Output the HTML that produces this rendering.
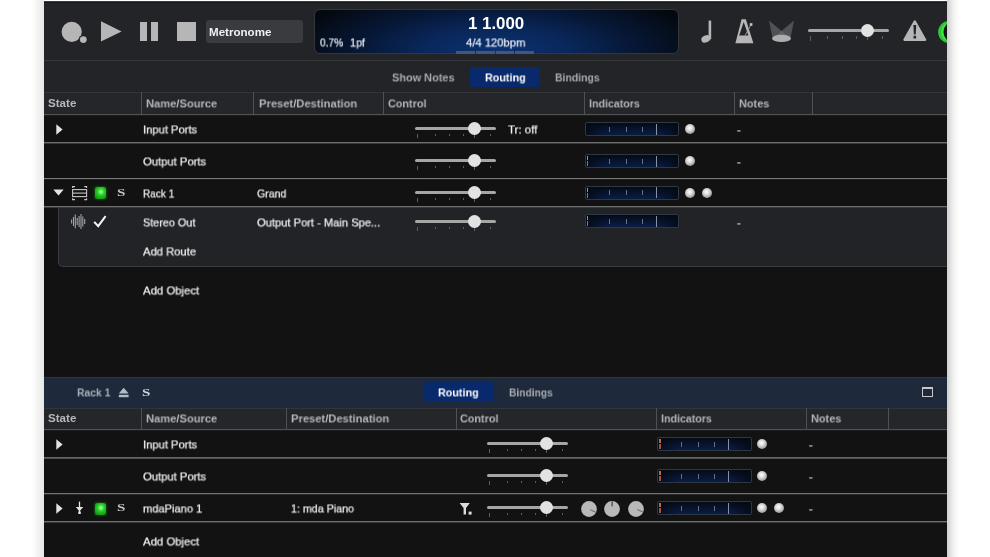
<!DOCTYPE html>
<html><head><meta charset="utf-8"><title>Rack</title>
<style>
html,body{margin:0;padding:0}
body{width:990px;height:557px;position:relative;overflow:hidden;background:#fff;font-family:"Liberation Sans",sans-serif}
.abs,.trk,.tk,.knb,.ind,.led,.gled,.hl,.hdr,.vl,.sub,.win,.topb,.tbar,.disp,.t{position:absolute}
.shl{position:absolute;left:32px;top:0;width:12px;height:557px;background:linear-gradient(to right,rgba(0,0,0,0),rgba(0,0,0,0.095))}
.shr{position:absolute;left:947px;top:0;width:12px;height:557px;background:linear-gradient(to left,rgba(0,0,0,0),rgba(0,0,0,0.05) 45%,rgba(0,0,0,0.19))}
.win{left:44px;top:1px;width:903px;height:556px;background:#121212}
.topb{left:44px;top:1px;width:903px;height:2px;background:linear-gradient(#3a3b3f 50%,#18191c 50%)}
.tbar{left:44px;top:3px;width:903px;height:90px;background:#232428}
.disp{left:313.6px;top:8.6px;width:365px;height:45.4px;box-sizing:border-box;border:1px solid #34363b;border-radius:6px;
 background:radial-gradient(ellipse 58% 150% at 50% 95%,#0b3272 0%,#09275a 35%,#061633 68%,#04090f 100%)}
.trk{height:3px;border-radius:1.5px;background:#a6a6a6}
.tk{width:1px;background:#5c5d60}
.knb{width:13px;height:13px;border-radius:50%;background:#e2e2e2}
.ind{width:94px;height:14px;box-sizing:border-box;border:1px solid #2f3644;border-radius:2px;
 background:linear-gradient(to right,rgba(4,8,16,0.75) 0%,rgba(4,8,16,0) 22%,rgba(4,8,16,0) 78%,rgba(4,8,16,0.75) 100%),linear-gradient(to bottom,#050a15 0%,#07122a 40%,#091d46 100%)}
.ind i{position:absolute;display:block}
.it{top:3.5px;width:1px;height:5px;background:#6a7282}
.il{top:0.5px;width:1.3px;height:11px;background:#8890a2}
.or1{left:1px;top:1px;width:1px;height:4px;background:#e87832}
.or2{left:1px;top:6px;width:1px;height:5px;background:#a47258}
.led{width:10px;height:10px;border-radius:50%;background:radial-gradient(circle at 45% 40%,#ffffff 0%,#d8d8d8 35%,#8c8c8c 80%,#666 100%)}
.gled{width:11.2px;height:11.6px;border-radius:2.5px;background:radial-gradient(circle at 54% 40%,#d8ffd0 0%,#5cf05c 18%,#22c622 42%,#14a014 75%,#0f7a0f 100%);box-shadow:0 0 2px 0.5px #0b4a0b}
.hdr{left:44px;width:903px;height:22px;background:#252629;border-top:1px solid #343539;box-sizing:border-box}
.vl{width:1px;height:22px;background:#505155}
.sub{background:#222327;box-sizing:border-box;border:1.5px solid #3a3b40;border-right:none;border-top:none;border-bottom-left-radius:5px}
.t{white-space:nowrap;line-height:20px;height:20px;transform-origin:0 50%;will-change:transform}
</style></head>
<body>
<div class="shl"></div><div class="shr"></div>
<div class="win"></div>
<div class="topb"></div>
<div class="tbar"></div>
<svg class="abs" style="left:58px;top:18px" width="32" height="28" viewBox="58 18 32 28">
<circle cx="71.7" cy="31.8" r="10.1" fill="#b6b6b6"/>
<circle cx="83.3" cy="39.6" r="4.6" fill="#232428"/>
<circle cx="83.3" cy="39.6" r="3.4" fill="#b6b6b6"/>
</svg>
<svg class="abs" style="left:100px;top:20px" width="24" height="24" viewBox="100 20 24 24"><path d="M101 21.2 L121.6 31.4 L101 41.6 Z" fill="#b6b6b6"/></svg>
<div class="abs" style="left:139.6px;top:21.6px;width:7px;height:19.2px;background:#b6b6b6"></div>
<div class="abs" style="left:150.6px;top:21.6px;width:7px;height:19.2px;background:#b6b6b6"></div>
<div class="abs" style="left:177px;top:21.8px;width:19px;height:18.8px;background:#b6b6b6"></div>
<div class="abs" style="left:206px;top:20px;width:97px;height:22.5px;background:#3a3b3f;border-radius:3px"></div>
<div class="disp"></div>
<div class="abs" style="left:456.4px;top:51px;width:18.6px;height:3px;background:#46567a"></div>
<div class="abs" style="left:476.0px;top:51px;width:18.6px;height:3px;background:#46567a"></div>
<div class="abs" style="left:495.6px;top:51px;width:18.6px;height:3px;background:#46567a"></div>
<div class="abs" style="left:515.2px;top:51px;width:18.6px;height:3px;background:#46567a"></div>
<svg class="abs" style="left:698px;top:18px" width="18" height="28" viewBox="698 18 18 28">
<rect x="708.6" y="20.6" width="2.6" height="18.6" fill="#b6b6b6"/>
<ellipse cx="705.9" cy="38.9" rx="4.7" ry="3.4" transform="rotate(-25 705.9 38.9)" fill="#b6b6b6"/>
</svg>
<svg class="abs" style="left:733px;top:17px" width="24" height="28" viewBox="733 17 24 28">
<path d="M741.6 19.2 L745.8 19.2 L753.4 43.2 L735.4 43.2 Z" fill="#b6b6b6"/>
<path d="M743.7 22 L748.4 35.4 L739.2 35.4 Z" fill="#232428"/>
<path d="M745 35.6 L750.8 25" stroke="#a0a0a0" stroke-width="0.9" fill="none"/>
<rect x="749.8" y="23.2" width="2.6" height="2.6" fill="#c8c8c8"/>
</svg>
<svg class="abs" style="left:767px;top:18px" width="30" height="28" viewBox="767 18 30 28">
<path d="M769 20.6 L790.6 38.6 L772.6 38.6 Z" fill="#6c6d71" fill-opacity="0.62"/>
<path d="M794 20.6 L772.4 38.6 L790.4 38.6 Z" fill="#6c6d71" fill-opacity="0.62"/>
<ellipse cx="781.5" cy="38.4" rx="9.4" ry="3.7" fill="#aeaeae"/>
</svg>
<div class="trk" style="left:808px;top:29.3px;width:81px"></div>
<div class="tk" style="left:809.6px;top:36.0px;height:4.6px"></div>
<div class="tk" style="left:827.2px;top:36.0px;height:2.6px"></div>
<div class="tk" style="left:841.6px;top:36.0px;height:2.6px"></div>
<div class="tk" style="left:855.8px;top:36.0px;height:2.6px"></div>
<div class="tk" style="left:867.0px;top:36.0px;height:4px"></div>
<div class="tk" style="left:882.2px;top:36.0px;height:2.6px"></div>
<div class="knb" style="left:861.2px;top:24.3px"></div>
<svg class="abs" style="left:901px;top:17px" width="28" height="26" viewBox="901 17 28 26">
<path d="M914.8 21.4 L925.2 39.8 L904.4 39.8 Z" fill="#b6b6b6" stroke="#b6b6b6" stroke-width="2.2" stroke-linejoin="round"/>
<path d="M913.4 25 H916.2 L915.7 34.4 H913.9 Z" fill="#232428"/>
<rect x="913.5" y="35.8" width="2.6" height="2.7" fill="#232428"/>
</svg>
<svg class="abs" style="left:933px;top:14px" width="14" height="36" viewBox="933 14 14 36">
<defs><filter id="gb" x="-20%" y="-20%" width="140%" height="140%"><feGaussianBlur stdDeviation="0.55"/></filter></defs>
<g filter="url(#gb)"><circle cx="949.2" cy="32" r="11.1" fill="#2bc832"/><circle cx="950.4" cy="32" r="9.6" fill="#3ee045"/><circle cx="954" cy="32" r="10.5" fill="#14161a"/></g>
</svg>
<div class="hl" style="left:44px;top:60px;width:903px;height:1px;background:#36373b"></div>
<div class="abs" style="left:469.6px;top:66.6px;width:70.6px;height:20.4px;background:#08296c;border-radius:3px"></div>
<div class="hdr" style="top:92px;height:22px"></div>
<div class="vl" style="left:140.5px;top:92px;height:22px"></div>
<div class="vl" style="left:253.1px;top:92px;height:22px"></div>
<div class="vl" style="left:383.1px;top:92px;height:22px"></div>
<div class="vl" style="left:583.5px;top:92px;height:22px"></div>
<div class="vl" style="left:733.7px;top:92px;height:22px"></div>
<div class="vl" style="left:811.9px;top:92px;height:22px"></div>
<div class="hl" style="left:44px;top:114px;width:903px;height:1px;background:#525254"></div><div class="hl" style="left:44px;top:115px;width:903px;height:1px;background:#1c1c1e"></div>
<div class="hl" style="left:44px;top:142px;width:903px;height:1px;background:#6e6e6e"></div><div class="hl" style="left:44px;top:143px;width:903px;height:1px;background:#383838"></div>
<div class="hl" style="left:44px;top:178px;width:903px;height:1px;background:#7a7a7a"></div><div class="hl" style="left:44px;top:179px;width:903px;height:1px;background:#1e1e1e"></div>
<div class="sub" style="left:58px;top:206.5px;width:889px;height:60px"></div>
<div class="hl" style="left:44px;top:206px;width:903px;height:1px;background:#6e6e6e"></div><div class="hl" style="left:44px;top:207px;width:903px;height:1px;background:#3a3a3c"></div>
<svg class="abs" style="left:55.6px;top:123.80000000000001px" width="7" height="11" viewBox="0 0 7 11"><path d="M0.3 0.2 L6.6 5.5 L0.3 10.8 Z" fill="#e4e4e4"/></svg>
<div class="trk" style="left:415.4px;top:127.0px;width:81px"></div>
<div class="tk" style="left:417.0px;top:133.7px;height:4.6px"></div>
<div class="tk" style="left:434.6px;top:133.7px;height:2.6px"></div>
<div class="tk" style="left:449.0px;top:133.7px;height:2.6px"></div>
<div class="tk" style="left:463.2px;top:133.7px;height:2.6px"></div>
<div class="tk" style="left:474.4px;top:133.7px;height:4px"></div>
<div class="tk" style="left:489.6px;top:133.7px;height:2.6px"></div>
<div class="knb" style="left:468.4px;top:122.0px"></div>
<div class="ind" style="left:585px;top:122px;width:94px"><i class="it" style="left:22.7px"></i><i class="it" style="left:39.7px"></i><i class="it" style="left:55.7px"></i><i class="il" style="left:69.6px"></i></div>
<div class="led" style="left:684.6px;top:124px"></div>
<div class="trk" style="left:415.4px;top:159.0px;width:81px"></div>
<div class="tk" style="left:417.0px;top:165.7px;height:4.6px"></div>
<div class="tk" style="left:434.6px;top:165.7px;height:2.6px"></div>
<div class="tk" style="left:449.0px;top:165.7px;height:2.6px"></div>
<div class="tk" style="left:463.2px;top:165.7px;height:2.6px"></div>
<div class="tk" style="left:474.4px;top:165.7px;height:4px"></div>
<div class="tk" style="left:489.6px;top:165.7px;height:2.6px"></div>
<div class="knb" style="left:468.4px;top:154.0px"></div>
<div class="ind" style="left:585px;top:154px;width:94px"><i class="or1" style="width:1px;background:#e87832"></i><i class="or2" style="width:1px;background:#a47258"></i><i class="it" style="left:22.7px"></i><i class="it" style="left:39.7px"></i><i class="it" style="left:55.7px"></i><i class="il" style="left:69.6px"></i></div>
<div class="led" style="left:684.6px;top:156px"></div>
<svg class="abs" style="left:53px;top:189.4px" width="11" height="7" viewBox="0 0 11 7"><path d="M0.3 0.5 L10.7 0.5 L5.5 6.5 Z" fill="#e4e4e4"/></svg>
<svg class="abs" style="left:71px;top:185px" width="17" height="16" viewBox="71 185 17 16">
<g fill="none" stroke="#c6c6c6" stroke-width="1.1">
<rect x="72.6" y="189.6" width="14" height="7"/>
<path d="M72.6 193.1 H86.6"/>
<path d="M72.6 188 V186.6 H75"/><path d="M86.6 188 V186.6 H84.2"/>
<path d="M72.6 198.2 V199.6 H75"/><path d="M86.6 198.2 V199.6 H84.2"/>
</g></svg>
<div class="gled" style="left:94.6px;top:187.2px"></div>
<div class="trk" style="left:415.4px;top:191.0px;width:81px"></div>
<div class="tk" style="left:417.0px;top:197.7px;height:4.6px"></div>
<div class="tk" style="left:434.6px;top:197.7px;height:2.6px"></div>
<div class="tk" style="left:449.0px;top:197.7px;height:2.6px"></div>
<div class="tk" style="left:463.2px;top:197.7px;height:2.6px"></div>
<div class="tk" style="left:474.4px;top:197.7px;height:4px"></div>
<div class="tk" style="left:489.6px;top:197.7px;height:2.6px"></div>
<div class="knb" style="left:468.4px;top:186.0px"></div>
<div class="ind" style="left:585px;top:185.5px;width:94px"><i class="or1" style="width:1px;background:#e87832"></i><i class="or2" style="width:1px;background:#a47258"></i><i class="it" style="left:22.7px"></i><i class="it" style="left:39.7px"></i><i class="it" style="left:55.7px"></i><i class="il" style="left:69.6px"></i></div>
<div class="led" style="left:684.6px;top:187.5px"></div>
<div class="led" style="left:701.5px;top:187.5px"></div>
<svg class="abs" style="left:70px;top:213px" width="17" height="17" viewBox="70 213 17 17">
<g stroke="#a2a2a2" stroke-width="1.1" fill="none">
<path d="M71.6 219.6 V223.6"/><path d="M73.5 217 V226"/><path d="M75.3 214.4 V228.2"/><path d="M77.2 218 V225"/>
<path d="M79.1 216 V227"/><path d="M81 214 V229"/><path d="M82.8 216.4 V226.6"/><path d="M84.7 219 V224"/>
</g></svg>
<svg class="abs" style="left:92px;top:214px" width="16" height="15" viewBox="92 214 16 15"><path d="M94.2 221.8 L98.2 226.2 L105.6 216.2" stroke="#f6f6f6" stroke-width="2" fill="none"/></svg>
<div class="trk" style="left:415.4px;top:220.0px;width:81px"></div>
<div class="tk" style="left:417.0px;top:226.7px;height:4.6px"></div>
<div class="tk" style="left:434.6px;top:226.7px;height:2.6px"></div>
<div class="tk" style="left:449.0px;top:226.7px;height:2.6px"></div>
<div class="tk" style="left:463.2px;top:226.7px;height:2.6px"></div>
<div class="tk" style="left:474.4px;top:226.7px;height:4px"></div>
<div class="tk" style="left:489.6px;top:226.7px;height:2.6px"></div>
<div class="knb" style="left:468.4px;top:215.0px"></div>
<div class="ind" style="left:585px;top:214px;width:94px"><i class="or1" style="width:1px;background:#e87832"></i><i class="or2" style="width:1px;background:#a47258"></i><i class="it" style="left:22.7px"></i><i class="it" style="left:39.7px"></i><i class="it" style="left:55.7px"></i><i class="il" style="left:69.6px"></i></div>
<div class="abs" style="left:44px;top:377px;width:903px;height:31px;background:#1e2a3c;border-top:1px solid #2a3648;box-sizing:border-box"></div>
<svg class="abs" style="left:118px;top:387px" width="12" height="11" viewBox="0 0 12 11">
<path d="M5.7 0.8 L10.6 6.6 L0.8 6.6 Z" fill="#b4bac2"/><rect x="0.8" y="7.8" width="9.8" height="2.4" fill="#b4bac2"/></svg>
<div class="abs" style="left:423.8px;top:382.4px;width:70.2px;height:20px;background:#08296c;border-radius:3px"></div>
<div class="abs" style="left:921.6px;top:387.4px;width:11.4px;height:10px;box-sizing:border-box;border:1px solid #c8c8c8;border-top-width:2px"></div>
<div class="hdr" style="top:408px;height:21px"></div>
<div class="vl" style="left:140.5px;top:408px;height:21px"></div>
<div class="vl" style="left:286.2px;top:408px;height:21px"></div>
<div class="vl" style="left:455.5px;top:408px;height:21px"></div>
<div class="vl" style="left:655.8px;top:408px;height:21px"></div>
<div class="vl" style="left:805.9px;top:408px;height:21px"></div>
<div class="vl" style="left:888.0px;top:408px;height:21px"></div>
<div class="hl" style="left:44px;top:429px;width:903px;height:1px;background:#525254"></div><div class="hl" style="left:44px;top:430px;width:903px;height:1px;background:#1c1c1e"></div>
<div class="hl" style="left:44px;top:457px;width:903px;height:1px;background:#646464"></div><div class="hl" style="left:44px;top:458px;width:903px;height:1px;background:#505050"></div>
<div class="hl" style="left:44px;top:493px;width:903px;height:1px;background:#727272"></div><div class="hl" style="left:44px;top:494px;width:903px;height:1px;background:#2a2a2a"></div>
<div class="hl" style="left:44px;top:521px;width:903px;height:1px;background:#6e6e6e"></div><div class="hl" style="left:44px;top:522px;width:903px;height:1px;background:#383838"></div>
<svg class="abs" style="left:55.6px;top:438.8px" width="7" height="11" viewBox="0 0 7 11"><path d="M0.3 0.2 L6.6 5.5 L0.3 10.8 Z" fill="#e4e4e4"/></svg>
<div class="trk" style="left:487.4px;top:442.0px;width:81px"></div>
<div class="tk" style="left:489.0px;top:448.7px;height:4.6px"></div>
<div class="tk" style="left:506.6px;top:448.7px;height:2.6px"></div>
<div class="tk" style="left:521.0px;top:448.7px;height:2.6px"></div>
<div class="tk" style="left:535.2px;top:448.7px;height:2.6px"></div>
<div class="tk" style="left:546.4px;top:448.7px;height:4px"></div>
<div class="tk" style="left:561.6px;top:448.7px;height:2.6px"></div>
<div class="knb" style="left:540.4px;top:437.0px"></div>
<div class="ind" style="left:657px;top:437px;width:95px"><i class="or1" style="width:2px;background:#c06a38"></i><i class="or2" style="width:2px;background:#96583c"></i><i class="it" style="left:22.7px"></i><i class="it" style="left:39.7px"></i><i class="it" style="left:55.7px"></i><i class="il" style="left:69.6px"></i></div>
<div class="led" style="left:757px;top:439px"></div>
<div class="trk" style="left:487.4px;top:474.0px;width:81px"></div>
<div class="tk" style="left:489.0px;top:480.7px;height:4.6px"></div>
<div class="tk" style="left:506.6px;top:480.7px;height:2.6px"></div>
<div class="tk" style="left:521.0px;top:480.7px;height:2.6px"></div>
<div class="tk" style="left:535.2px;top:480.7px;height:2.6px"></div>
<div class="tk" style="left:546.4px;top:480.7px;height:4px"></div>
<div class="tk" style="left:561.6px;top:480.7px;height:2.6px"></div>
<div class="knb" style="left:540.4px;top:469.0px"></div>
<div class="ind" style="left:657px;top:469px;width:95px"><i class="or1" style="width:2px;background:#c06a38"></i><i class="or2" style="width:2px;background:#96583c"></i><i class="it" style="left:22.7px"></i><i class="it" style="left:39.7px"></i><i class="it" style="left:55.7px"></i><i class="il" style="left:69.6px"></i></div>
<div class="led" style="left:757px;top:471px"></div>
<svg class="abs" style="left:55.6px;top:502.8px" width="7" height="11" viewBox="0 0 7 11"><path d="M0.3 0.2 L6.6 5.5 L0.3 10.8 Z" fill="#e4e4e4"/></svg>
<svg class="abs" style="left:74px;top:500px" width="11" height="16" viewBox="74 500 11 16">
<path d="M79.5 501.6 V513" stroke="#e6e6e6" stroke-width="1.3" fill="none"/>
<path d="M75.8 506.9 H83.2 L80 510.8 H79 Z" fill="#e6e6e6"/>
<rect x="78.3" y="511.4" width="2.5" height="2.7" rx="0.6" fill="#e6e6e6"/>
</svg>
<div class="gled" style="left:94.6px;top:503px"></div>
<svg class="abs" style="left:459px;top:502px" width="15" height="14" viewBox="0 0 15 14">
<path d="M0.6 1 H10.8 L7 6 V12.4 H4.6 V6 Z" fill="#dcdcdc"/><rect x="9.6" y="9.6" width="3" height="3" fill="#dcdcdc"/></svg>
<div class="trk" style="left:487.4px;top:506.0px;width:81px"></div>
<div class="tk" style="left:489.0px;top:512.7px;height:4.6px"></div>
<div class="tk" style="left:506.6px;top:512.7px;height:2.6px"></div>
<div class="tk" style="left:521.0px;top:512.7px;height:2.6px"></div>
<div class="tk" style="left:535.2px;top:512.7px;height:2.6px"></div>
<div class="tk" style="left:546.4px;top:512.7px;height:4px"></div>
<div class="tk" style="left:561.6px;top:512.7px;height:2.6px"></div>
<div class="knb" style="left:540.4px;top:501.0px"></div>
<svg class="abs" style="left:579.9px;top:499.6px" width="18" height="18" viewBox="-9 -9 18 18">
<circle r="7.9" fill="#b9b9b9"/><path d="M0 -1.5 L0 -7.6" stroke="#707070" stroke-width="1.1" transform="rotate(116)"/></svg>
<svg class="abs" style="left:603.3px;top:499.6px" width="18" height="18" viewBox="-9 -9 18 18">
<circle r="7.9" fill="#b9b9b9"/><path d="M0 -2.6 L0 -7.6" stroke="#5e5e5e" stroke-width="1.6" transform="rotate(2)"/></svg>
<svg class="abs" style="left:626.7px;top:499.6px" width="18" height="18" viewBox="-9 -9 18 18">
<circle r="7.9" fill="#b9b9b9"/><path d="M0 -1.5 L0 -7.6" stroke="#707070" stroke-width="1.1" transform="rotate(114)"/></svg>
<div class="ind" style="left:657px;top:501px;width:95px"><i class="or1" style="width:2px;background:#c06a38"></i><i class="or2" style="width:2px;background:#96583c"></i><i class="it" style="left:22.7px"></i><i class="it" style="left:39.7px"></i><i class="it" style="left:55.7px"></i><i class="il" style="left:69.6px"></i></div>
<div class="led" style="left:757px;top:503px"></div>
<div class="led" style="left:773.6px;top:503px"></div>
<span class="t" id="t0" style="left:209.4px;top:21.700000000000003px;font-size:11.5px;font-weight:bold;color:#f0f0f0;font-family:'Liberation Sans', sans-serif;transform:translateY(0.4px) scaleX(1.0065)">Metronome</span>
<span class="t" id="t1" style="-webkit-text-stroke:0.25px;left:320.2px;top:32.1px;font-size:11.5px;font-weight:normal;color:#e8ecf4;font-family:'Liberation Sans', sans-serif;transform:translateY(0.4px) scaleX(0.8846)">0.7%</span>
<span class="t" id="t2" style="-webkit-text-stroke:0.25px;left:350px;top:32.1px;font-size:11.5px;font-weight:normal;color:#e8ecf4;font-family:'Liberation Sans', sans-serif;transform:translateY(0.4px) scaleX(0.9375)">1pf</span>
<span class="t" id="t3" style="left:468.4px;top:12.899999999999999px;font-size:16.5px;font-weight:bold;color:#ffffff;font-family:'Liberation Sans', sans-serif;transform:translateY(0.4px) scaleX(1.0218)">1 1.000</span>
<span class="t" id="t4" style="-webkit-text-stroke:0.25px;left:465.7px;top:32.1px;font-size:11.5px;font-weight:normal;color:#e8ecf4;font-family:'Liberation Sans', sans-serif;transform:translateY(0.4px) scaleX(0.9770)">4/4 120bpm</span>
<span class="t" id="t5" style="left:392px;top:66.5px;font-size:11.5px;font-weight:bold;color:#a9abb0;font-family:'Liberation Sans', sans-serif;transform:translateY(0.4px) scaleX(0.9500)">Show Notes</span>
<span class="t" id="t6" style="left:484.6px;top:66.5px;font-size:11.5px;font-weight:bold;color:#ffffff;font-family:'Liberation Sans', sans-serif;transform:translateY(0.4px) scaleX(0.9349)">Routing</span>
<span class="t" id="t7" style="left:554.5px;top:66.5px;font-size:11.5px;font-weight:bold;color:#a9abb0;font-family:'Liberation Sans', sans-serif;transform:translateY(0.4px) scaleX(0.9082)">Bindings</span>
<span class="t" id="t8" style="left:48.4px;top:93.1px;font-size:11.5px;font-weight:bold;color:#b4b6ba;font-family:'Liberation Sans', sans-serif;transform:translateY(0.4px) scaleX(1.0107)">State</span>
<span class="t" id="t9" style="left:145.8px;top:93.1px;font-size:11.5px;font-weight:bold;color:#b4b6ba;font-family:'Liberation Sans', sans-serif;transform:translateY(0.4px) scaleX(0.9689)">Name/Source</span>
<span class="t" id="t10" style="left:258.5px;top:93.1px;font-size:11.5px;font-weight:bold;color:#b4b6ba;font-family:'Liberation Sans', sans-serif;transform:translateY(0.4px) scaleX(0.9723)">Preset/Destination</span>
<span class="t" id="t11" style="left:388.2px;top:93.1px;font-size:11.5px;font-weight:bold;color:#b4b6ba;font-family:'Liberation Sans', sans-serif;transform:translateY(0.4px) scaleX(0.9390)">Control</span>
<span class="t" id="t12" style="left:588.8px;top:93.1px;font-size:11.5px;font-weight:bold;color:#b4b6ba;font-family:'Liberation Sans', sans-serif;transform:translateY(0.4px) scaleX(0.9255)">Indicators</span>
<span class="t" id="t13" style="left:739px;top:93.1px;font-size:11.5px;font-weight:bold;color:#b4b6ba;font-family:'Liberation Sans', sans-serif;transform:translateY(0.4px) scaleX(0.9500)">Notes</span>
<span class="t" id="t14" style="-webkit-text-stroke:0.25px;left:143.3px;top:119.0px;font-size:11.5px;font-weight:normal;color:#f0f0f0;font-family:'Liberation Sans', sans-serif;transform:translateY(0.4px) scaleX(0.9732)">Input Ports</span>
<span class="t" id="t15" style="-webkit-text-stroke:0.25px;left:508px;top:119.0px;font-size:11.5px;font-weight:normal;color:#f0f0f0;font-family:'Liberation Sans', sans-serif;transform:translateY(0.4px) scaleX(0.9931)">Tr: off</span>
<span class="t" id="t16" style="-webkit-text-stroke:0.25px;left:737.4px;top:118.6px;font-size:11.5px;font-weight:normal;color:#f0f0f0;font-family:'Liberation Sans', sans-serif;transform:translateY(0.4px) scaleX(0.9500)">-</span>
<span class="t" id="t17" style="-webkit-text-stroke:0.25px;left:143.3px;top:151.0px;font-size:11.5px;font-weight:normal;color:#f0f0f0;font-family:'Liberation Sans', sans-serif;transform:translateY(0.4px) scaleX(0.9769)">Output Ports</span>
<span class="t" id="t18" style="-webkit-text-stroke:0.25px;left:737.4px;top:150.6px;font-size:11.5px;font-weight:normal;color:#f0f0f0;font-family:'Liberation Sans', sans-serif;transform:translateY(0.4px) scaleX(0.9500)">-</span>
<span class="t" id="t19" style="left:116.6px;top:182.5px;font-size:10.5px;font-weight:bold;color:#c4c4c4;font-family:'Liberation Serif', serif;transform:translateY(0.4px) scaleX(1.4333)">S</span>
<span class="t" id="t20" style="-webkit-text-stroke:0.25px;left:143.3px;top:183.0px;font-size:11.5px;font-weight:normal;color:#f0f0f0;font-family:'Liberation Sans', sans-serif;transform:translateY(0.4px) scaleX(0.8694)">Rack 1</span>
<span class="t" id="t21" style="-webkit-text-stroke:0.25px;left:256.7px;top:183.0px;font-size:11.5px;font-weight:normal;color:#f0f0f0;font-family:'Liberation Sans', sans-serif;transform:translateY(0.4px) scaleX(0.9156)">Grand</span>
<span class="t" id="t22" style="-webkit-text-stroke:0.25px;left:143.3px;top:212.0px;font-size:11.5px;font-weight:normal;color:#f0f0f0;font-family:'Liberation Sans', sans-serif;transform:translateY(0.4px) scaleX(0.9411)">Stereo Out</span>
<span class="t" id="t23" style="-webkit-text-stroke:0.25px;left:256.7px;top:212.0px;font-size:11.5px;font-weight:normal;color:#f0f0f0;font-family:'Liberation Sans', sans-serif;transform:translateY(0.4px) scaleX(0.9693)">Output Port - Main Spe...</span>
<span class="t" id="t24" style="-webkit-text-stroke:0.25px;left:737.4px;top:211.6px;font-size:11.5px;font-weight:normal;color:#f0f0f0;font-family:'Liberation Sans', sans-serif;transform:translateY(0.4px) scaleX(0.9500)">-</span>
<span class="t" id="t25" style="-webkit-text-stroke:0.25px;left:143.3px;top:241.0px;font-size:11.5px;font-weight:normal;color:#f0f0f0;font-family:'Liberation Sans', sans-serif;transform:translateY(0.4px) scaleX(0.9759)">Add Route</span>
<span class="t" id="t26" style="-webkit-text-stroke:0.25px;left:143.3px;top:279.5px;font-size:11.5px;font-weight:normal;color:#f0f0f0;font-family:'Liberation Sans', sans-serif;transform:translateY(0.4px) scaleX(0.9877)">Add Object</span>
<span class="t" id="t27" style="left:77px;top:381.8px;font-size:11.5px;font-weight:bold;color:#aab0ba;font-family:'Liberation Sans', sans-serif;transform:translateY(0.4px) scaleX(0.9000)">Rack 1</span>
<span class="t" id="t28" style="left:142.2px;top:381.6px;font-size:11px;font-weight:bold;color:#d0d4da;font-family:'Liberation Serif', serif;transform:translateY(0.4px) scaleX(1.3667)">S</span>
<span class="t" id="t29" style="left:438px;top:382.0px;font-size:11.5px;font-weight:bold;color:#ffffff;font-family:'Liberation Sans', sans-serif;transform:translateY(0.4px) scaleX(0.9349)">Routing</span>
<span class="t" id="t30" style="left:508.6px;top:382.0px;font-size:11.5px;font-weight:bold;color:#a9abb0;font-family:'Liberation Sans', sans-serif;transform:translateY(0.4px) scaleX(0.8898)">Bindings</span>
<span class="t" id="t31" style="left:48.4px;top:408.1px;font-size:11.5px;font-weight:bold;color:#b4b6ba;font-family:'Liberation Sans', sans-serif;transform:translateY(0.4px) scaleX(1.0107)">State</span>
<span class="t" id="t32" style="left:145.8px;top:408.1px;font-size:11.5px;font-weight:bold;color:#b4b6ba;font-family:'Liberation Sans', sans-serif;transform:translateY(0.4px) scaleX(0.9689)">Name/Source</span>
<span class="t" id="t33" style="left:291.3px;top:408.1px;font-size:11.5px;font-weight:bold;color:#b4b6ba;font-family:'Liberation Sans', sans-serif;transform:translateY(0.4px) scaleX(0.9723)">Preset/Destination</span>
<span class="t" id="t34" style="left:460.3px;top:408.1px;font-size:11.5px;font-weight:bold;color:#b4b6ba;font-family:'Liberation Sans', sans-serif;transform:translateY(0.4px) scaleX(0.9390)">Control</span>
<span class="t" id="t35" style="left:661px;top:408.1px;font-size:11.5px;font-weight:bold;color:#b4b6ba;font-family:'Liberation Sans', sans-serif;transform:translateY(0.4px) scaleX(0.9255)">Indicators</span>
<span class="t" id="t36" style="left:811px;top:408.1px;font-size:11.5px;font-weight:bold;color:#b4b6ba;font-family:'Liberation Sans', sans-serif;transform:translateY(0.4px) scaleX(0.9500)">Notes</span>
<span class="t" id="t37" style="-webkit-text-stroke:0.25px;left:143.3px;top:434.0px;font-size:11.5px;font-weight:normal;color:#f0f0f0;font-family:'Liberation Sans', sans-serif;transform:translateY(0.4px) scaleX(0.9732)">Input Ports</span>
<span class="t" id="t38" style="-webkit-text-stroke:0.25px;left:809.0px;top:433.6px;font-size:11.5px;font-weight:normal;color:#f0f0f0;font-family:'Liberation Sans', sans-serif;transform:translateY(0.4px) scaleX(0.9500)">-</span>
<span class="t" id="t39" style="-webkit-text-stroke:0.25px;left:143.3px;top:466.0px;font-size:11.5px;font-weight:normal;color:#f0f0f0;font-family:'Liberation Sans', sans-serif;transform:translateY(0.4px) scaleX(0.9769)">Output Ports</span>
<span class="t" id="t40" style="-webkit-text-stroke:0.25px;left:809.0px;top:465.6px;font-size:11.5px;font-weight:normal;color:#f0f0f0;font-family:'Liberation Sans', sans-serif;transform:translateY(0.4px) scaleX(0.9500)">-</span>
<span class="t" id="t41" style="left:116.6px;top:497.7px;font-size:10.5px;font-weight:bold;color:#c4c4c4;font-family:'Liberation Serif', serif;transform:translateY(0.4px) scaleX(1.4333)">S</span>
<span class="t" id="t42" style="-webkit-text-stroke:0.25px;left:143.3px;top:498.0px;font-size:11.5px;font-weight:normal;color:#f0f0f0;font-family:'Liberation Sans', sans-serif;transform:translateY(0.4px) scaleX(0.9656)">mdaPiano 1</span>
<span class="t" id="t43" style="-webkit-text-stroke:0.25px;left:290.5px;top:498.0px;font-size:11.5px;font-weight:normal;color:#f0f0f0;font-family:'Liberation Sans', sans-serif;transform:translateY(0.4px) scaleX(0.9309)">1: mda Piano</span>
<span class="t" id="t44" style="-webkit-text-stroke:0.25px;left:809.0px;top:497.6px;font-size:11.5px;font-weight:normal;color:#f0f0f0;font-family:'Liberation Sans', sans-serif;transform:translateY(0.4px) scaleX(0.9500)">-</span>
<span class="t" id="t45" style="-webkit-text-stroke:0.25px;left:143.3px;top:530.7px;font-size:11.5px;font-weight:normal;color:#f0f0f0;font-family:'Liberation Sans', sans-serif;transform:translateY(0.4px) scaleX(0.9877)">Add Object</span>
</body></html>
